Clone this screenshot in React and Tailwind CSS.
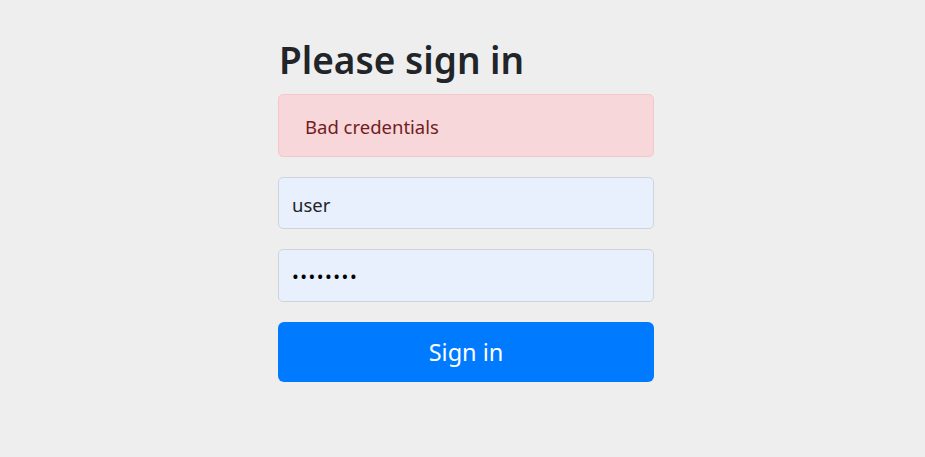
export default function App() {
  return (
    <div className="min-h-[457px] w-full bg-[#eeeeee] flex justify-center pl-[7px]" style={{ fontFamily: '"Noto Sans", "Open Sans", sans-serif' }}>
      <form className="w-[376px] flex flex-col pt-[36px]" onSubmit={(e) => e.preventDefault()}>
        <h2 className="text-[37px] leading-[48px] font-semibold text-[#212529] h-[50px] ml-[1px]">Please sign in</h2>
        <div className="mt-[8px] h-[63px] rounded-[5px] border border-[#f5c6cb] bg-[#f8d7da] text-[#721c24] text-[18.5px] flex items-center pl-[26px] pt-[2px]">
          Bad credentials
        </div>
        <input
          readOnly
          value="user"
          className="mt-[20px] h-[52px] rounded-[5px] border border-[#ced4da] bg-[#e8f0fe] px-[13px] pt-[3px] text-[18.5px] text-[#212529] outline-none"
        />
        <input
          readOnly
          type="password"
          value="password"
          className="mt-[20px] h-[53px] rounded-[5px] border border-[#ced4da] bg-[#e8f0fe] px-[13px] text-[18px] text-black outline-none tracking-[1.5px]"
        />
        <button
          type="submit"
          className="mt-[20px] h-[60px] rounded-[6px] bg-[#007bff] text-white text-[23.5px] flex items-center justify-center pt-[2px]"
        >
          Sign in
        </button>
      </form>
    </div>
  );
}
